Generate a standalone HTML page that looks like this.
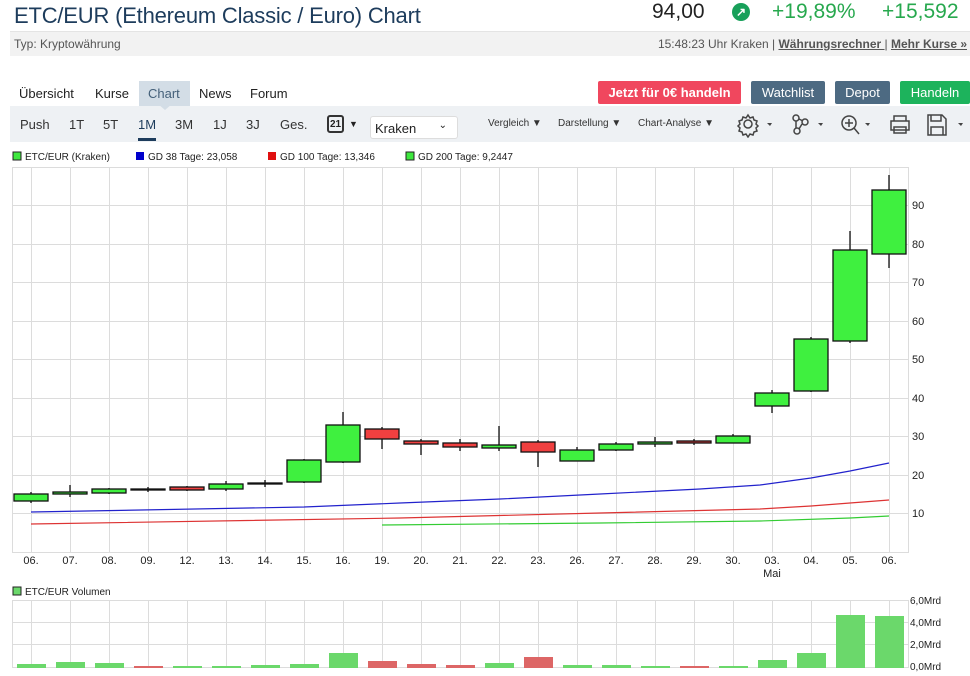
<!DOCTYPE html>
<html><head><meta charset="utf-8"><style>
*{margin:0;padding:0;box-sizing:border-box}
body{width:970px;height:676px;overflow:hidden;background:#fff;font-family:"Liberation Sans",sans-serif;position:relative;color:#222}
.a{position:absolute;white-space:nowrap}
.btn{position:absolute;top:81px;height:23px;color:#fff;font-size:13px;font-weight:bold;text-align:center;line-height:23px;border-radius:2px}
.tb{font-size:13px;color:#333;top:117px}
.sm{font-size:10px;color:#333;top:118px}
</style></head><body>
<div class="a" style="left:14px;top:3px;font-size:22px;letter-spacing:-0.2px;color:#1d3c5c">ETC/EUR (Ethereum Classic / Euro) Chart</div>
<div class="a" style="left:652px;top:0;font-size:21px;color:#222">94,00</div>
<div class="a" style="left:732px;top:3px;width:18px;height:18px;border-radius:50%;background:#18a05a;color:#fff;font-size:12px;text-align:center;line-height:18px;font-weight:bold">↗</div>
<div class="a" style="left:772px;top:0;font-size:21px;color:#27a84e">+19,89%</div>
<div class="a" style="left:882px;top:0;font-size:21px;color:#27a84e">+15,592</div>
<div class="a" style="left:10px;top:31px;width:960px;height:25px;background:#f2f2f2;border-top:1px solid #e4e4e4"></div>
<div class="a" style="left:14px;top:37px;font-size:12px;color:#555">Typ: Kryptowährung</div>
<div class="a" style="right:3px;top:37px;font-size:12px;color:#555">15:48:23 Uhr Kraken | <u style="font-weight:bold">Währungsrechner </u>| <u style="font-weight:bold">Mehr Kurse »</u></div>

<div class="a" style="left:139px;top:81px;width:51px;height:25px;background:#d3dde6"></div>
<div class="a" style="left:158px;top:104px;width:0;height:0;border-left:7px solid transparent;border-right:7px solid transparent;border-top:6px solid #d3dde6;z-index:2"></div>
<div class="a" style="left:19px;top:86px;font-size:13px">Übersicht</div>
<div class="a" style="left:95px;top:86px;font-size:13px">Kurse</div>
<div class="a" style="left:148px;top:86px;font-size:13px;color:#44607a">Chart</div>
<div class="a" style="left:199px;top:86px;font-size:13px">News</div>
<div class="a" style="left:250px;top:86px;font-size:13px">Forum</div>
<div class="btn" style="left:598px;width:143px;background:#f0475e">Jetzt für 0€ handeln</div>
<div class="btn" style="left:751px;width:74px;background:#4d6a82;font-weight:normal">Watchlist</div>
<div class="btn" style="left:835px;width:55px;background:#4d6a82;font-weight:normal">Depot</div>
<div class="btn" style="left:900px;width:70px;background:#1db35c;font-weight:normal">Handeln</div>

<div class="a" style="left:10px;top:106px;width:960px;height:36px;background:#eef1f4"></div>
<div class="a tb" style="left:20px">Push</div>
<div class="a tb" style="left:69px">1T</div>
<div class="a tb" style="left:103px">5T</div>
<div class="a tb" style="left:138px;color:#1d3c5c">1M</div>
<div class="a" style="left:138px;top:138px;width:18px;height:3px;background:#1d3c5c"></div>
<div class="a tb" style="left:175px">3M</div>
<div class="a tb" style="left:213px">1J</div>
<div class="a tb" style="left:246px">3J</div>
<div class="a tb" style="left:280px">Ges.</div>
<div class="a" style="left:327px;top:115px;width:17px;height:18px;border:2px solid #333;border-radius:3px;font-size:10px;font-weight:bold;text-align:center;line-height:15px">21</div>
<div class="a" style="left:349px;top:119px;font-size:9px">▼</div>
<div class="a" style="left:370px;top:116px;width:88px;height:23px;background:#fff;border:1px solid #ddd;border-radius:3px;font-size:13px;padding:4px 0 0 4px">Kraken<span style="position:absolute;right:10px;top:3px;font-size:10px">⌄</span></div>
<div class="a sm" style="left:488px">Vergleich ▼</div>
<div class="a sm" style="left:558px">Darstellung ▼</div>
<div class="a sm" style="left:638px">Chart-Analyse ▼</div>
<svg class="a" style="left:735px;top:112px" width="235" height="26" viewBox="0 0 235 26" fill="none" stroke="#444" stroke-width="1.5">
<circle cx="13" cy="12" r="4"/><path d="M13 3l2 3 3-1 1 3 3 1-1 3 2 2-2 2 1 3-3 1-1 3-3-1-2 3-2-3-3 1-1-3-3-1 1-3-2-2 2-2-1-3 3-1 1-3 3 1z"/>
<path d="M32 11l5 0 -2 3z" fill="#444" stroke="none"/>
<circle cx="61" cy="6" r="3"/><circle cx="70" cy="10" r="3"/><circle cx="62" cy="19" r="3"/><path d="M61 9v7M64 7l4 2M67 12l-3 5"/>
<path d="M83 11l5 0 -2 3z" fill="#444" stroke="none"/>
<circle cx="114" cy="11" r="7"/><path d="M119 16l5 6M114 7v8M110 11h8"/>
<path d="M130 11l5 0 -2 3z" fill="#444" stroke="none"/>
<path d="M159 9V4h12v5M156 9h18v9h-18zM159 15h12v6h-12z"/>
<path d="M193 3h14l4 4v16h-18zM196 3v6h10V3M196 23v-8h12v8"/>
<path d="M223 11l5 0 -2 3z" fill="#444" stroke="none"/>
</svg>

<svg class="a" style="left:0;top:0" width="970" height="676" font-family="Liberation Sans,sans-serif" font-size="11">
<g font-size="10" fill="#222">
<rect x="13" y="152" width="8" height="8" fill="#3ee83e" stroke="#222" stroke-width="1"/><text x="25" y="160">ETC/EUR (Kraken)</text>
<rect x="136" y="152" width="8" height="8" fill="#0000cc"/><text x="148" y="160">GD 38 Tage: 23,058</text>
<rect x="268" y="152" width="8" height="8" fill="#e01010"/><text x="280" y="160">GD 100 Tage: 13,346</text>
<rect x="406" y="152" width="8" height="8" fill="#3ee83e" stroke="#222"/><text x="418" y="160">GD 200 Tage: 9,2447</text>
<rect x="13" y="587" width="8" height="8" fill="#6bd86b" stroke="#222"/><text x="25" y="595">ETC/EUR Volumen</text>
</g>
<g stroke="#dcdcdc" stroke-width="1">
<path d="M12 167.5H908M12 205.5H908M12 244.5H908M12 282.5H908M12 321.5H908M12 359.5H908M12 398.5H908M12 436.5H908M12 475.5H908M12 513.5H908M12 552.5H908"/>
<path d="M12.5 167V553M908.5 167V553"/>
<path d="M31.5 167V553M70.5 167V553M109.5 167V553M148.5 167V553M187.5 167V553M226.5 167V553M265.5 167V553M304.5 167V553M343.5 167V553M382.5 167V553M421.5 167V553M460.5 167V553M499.5 167V553M538.5 167V553M577.5 167V553M616.5 167V553M655.5 167V553M694.5 167V553M733.5 167V553M772.5 167V553M811.5 167V553M850.5 167V553M889.5 167V553"/>
<path d="M12 600.5H908M12 622.5H908M12 644.5H908M12 667.5H908M12.5 600V668M908.5 600V668"/>
<path d="M31.5 600V668M70.5 600V668M109.5 600V668M148.5 600V668M187.5 600V668M226.5 600V668M265.5 600V668M304.5 600V668M343.5 600V668M382.5 600V668M421.5 600V668M460.5 600V668M499.5 600V668M538.5 600V668M577.5 600V668M616.5 600V668M655.5 600V668M694.5 600V668M733.5 600V668M772.5 600V668M811.5 600V668M850.5 600V668M889.5 600V668"/>
</g>
<g fill="#222" text-anchor="start">
<text x="912" y="209">90</text><text x="912" y="248">80</text><text x="912" y="286">70</text><text x="912" y="325">60</text><text x="912" y="363">50</text><text x="912" y="402">40</text><text x="912" y="440">30</text><text x="912" y="479">20</text><text x="912" y="517">10</text>
<g font-size="10"><text x="910" y="604">6,0Mrd</text><text x="910" y="626">4,0Mrd</text><text x="910" y="648">2,0Mrd</text><text x="910" y="670">0,0Mrd</text></g>
</g>
<g fill="#222" text-anchor="middle">
<text x="31" y="564">06.</text><text x="70" y="564">07.</text><text x="109" y="564">08.</text><text x="148" y="564">09.</text><text x="187" y="564">12.</text><text x="226" y="564">13.</text><text x="265" y="564">14.</text><text x="304" y="564">15.</text><text x="343" y="564">16.</text><text x="382" y="564">19.</text><text x="421" y="564">20.</text><text x="460" y="564">21.</text><text x="499" y="564">22.</text><text x="538" y="564">23.</text><text x="577" y="564">26.</text><text x="616" y="564">27.</text><text x="655" y="564">28.</text><text x="694" y="564">29.</text><text x="733" y="564">30.</text><text x="772" y="564">03.</text><text x="811" y="564">04.</text><text x="850" y="564">05.</text><text x="889" y="564">06.</text><text x="772" y="577">Mai</text>
</g>
<g fill="none" stroke-width="1.2">
<path d="M31 512 L304 507 L400 503 L500 499 L600 494 L700 489 L760 485 L811 478 L850 471 L889 463" stroke="#2222cc"/>
<path d="M31 524 L400 518 L600 513 L760 509 L811 506 L850 503 L889 500" stroke="#dd3333"/>
<path d="M382 525 L600 523 L760 521 L850 518 L889 516" stroke="#33cc33"/>
</g>
<g stroke="#111" stroke-width="1.3">
<path d="M31 492V503M70 485V497M109 488V494M148 487V492M187 486V491M226 481V491M265 480V487M304 459V483M343 412V463M382 427V449M421 439V455M460 439V451M499 426V451M538 440V467M577 447V461M616 442V451M655 437V447M694 439V445M733 434V443M772 390V413M811 337V392M850 231V343M889 175V268"/>
<g fill="#3ff03f">
<rect x="14" y="494" width="34" height="7"/><rect x="53" y="492" width="34" height="2"/><rect x="92" y="489" width="34" height="4"/><rect x="131" y="489" width="34" height="1"/><rect x="209" y="484" width="34" height="5"/><rect x="248" y="483" width="34" height="1"/><rect x="287" y="460" width="34" height="22"/><rect x="326" y="425" width="34" height="37"/><rect x="482" y="445" width="34" height="3"/><rect x="560" y="450" width="34" height="11"/><rect x="599" y="444" width="34" height="6"/><rect x="638" y="442" width="34" height="2"/><rect x="716" y="436" width="34" height="7"/><rect x="755" y="393" width="34" height="13"/><rect x="794" y="339" width="34" height="52"/><rect x="833" y="250" width="34" height="91"/><rect x="872" y="190" width="34" height="64"/>
</g>
<g fill="#f04040">
<rect x="170" y="487" width="34" height="3"/><rect x="365" y="429" width="34" height="10"/><rect x="404" y="441" width="34" height="3"/><rect x="443" y="443" width="34" height="4"/><rect x="521" y="442" width="34" height="10"/><rect x="677" y="441" width="34" height="2"/>
</g>
</g>
<g>
<g fill="#6bd86b">
<rect x="17" y="664" width="29" height="4"/><rect x="56" y="662" width="29" height="6"/><rect x="95" y="663" width="29" height="5"/><rect x="173" y="666" width="29" height="2"/><rect x="212" y="666" width="29" height="2"/><rect x="251" y="665" width="29" height="3"/><rect x="290" y="664" width="29" height="4"/><rect x="329" y="653" width="29" height="15"/><rect x="485" y="663" width="29" height="5"/><rect x="563" y="665" width="29" height="3"/><rect x="602" y="665" width="29" height="3"/><rect x="641" y="666" width="29" height="2"/><rect x="719" y="666" width="29" height="2"/><rect x="758" y="660" width="29" height="8"/><rect x="797" y="653" width="29" height="15"/><rect x="836" y="615" width="29" height="53"/><rect x="875" y="616" width="29" height="52"/>
</g>
<g fill="#dd6666">
<rect x="134" y="666" width="29" height="2"/><rect x="368" y="661" width="29" height="7"/><rect x="407" y="664" width="29" height="4"/><rect x="446" y="665" width="29" height="3"/><rect x="524" y="657" width="29" height="11"/><rect x="680" y="666" width="29" height="2"/>
</g>
</g>
</svg>
</body></html>
